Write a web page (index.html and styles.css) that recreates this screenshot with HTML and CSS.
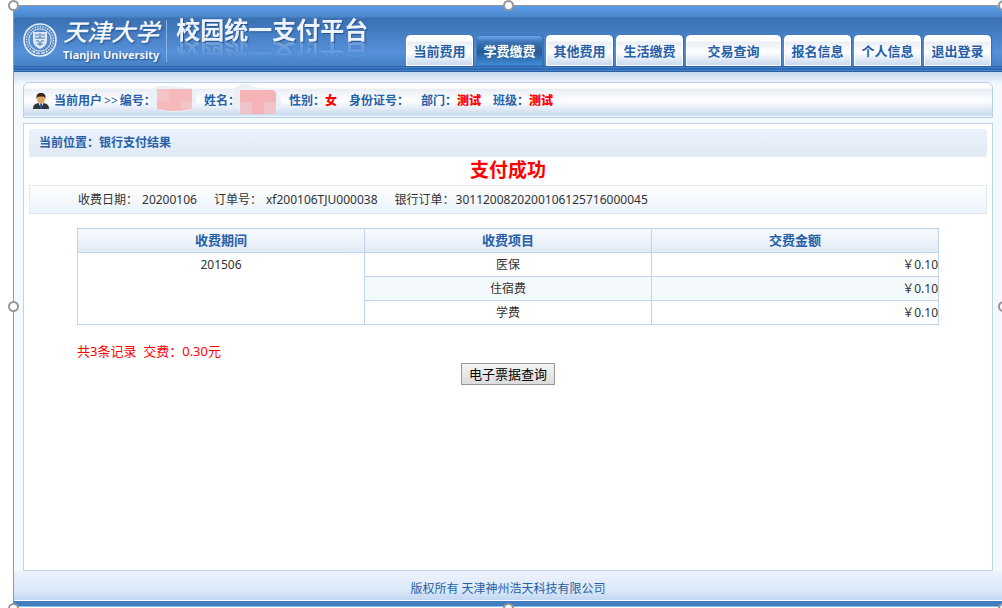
FILE: index.html
```html
<!DOCTYPE html>
<html lang="zh-CN">
<head>
<meta charset="utf-8">
<title>校园统一支付平台</title>
<link rel="stylesheet" href="styles.css">
</head>
<body>
<div class="frame">
  <div class="page">
    <header class="header">
      <div class="brand">
        <svg class="seal" viewBox="0 0 36 36" aria-hidden="true">
          <circle cx="18" cy="18" r="16" fill="#4a80c0" stroke="#e6effa" stroke-width="1.6"/>
          <circle cx="18" cy="18" r="13.4" fill="none" stroke="#b9d1ee" stroke-width="1.8" stroke-dasharray="1.6 1"/>
          <circle cx="18" cy="18" r="11.2" fill="#5a8dcb" stroke="#e6effa" stroke-width="1"/>
          <path d="M11 10h14v8c0 5-3 7-7 9-4-2-7-4-7-9z" fill="#dfe9f6"/>
          <path d="M13 13h4M19 13h4M18 11v5M13 16h10M14 19h3M19 19h3M15 22h6M18 19v5" stroke="#416fac" stroke-width="1" fill="none"/>
          <path d="M11 30l2-1M15 31h2M20 31h2M24 30l1-1" stroke="#fff" stroke-width="1.2"/>
        </svg>
        <div class="school">
          <span class="school-cn">天津大学</span>
          <span class="school-en">Tianjin University</span>
        </div>
        <h1 class="platform">校园统一支付平台</h1>
      </div>
      <nav class="tabs">
        <a class="tab" href="#">当前费用</a>
        <a class="tab active" href="#">学费缴费</a>
        <a class="tab" href="#">其他费用</a>
        <a class="tab" href="#">生活缴费</a>
        <a class="tab wide" href="#">交易查询</a>
        <a class="tab" href="#">报名信息</a>
        <a class="tab" href="#">个人信息</a>
        <a class="tab" href="#">退出登录</a>
      </nav>
    </header>

    <main class="main">
      <section class="user">
        <svg class="avatar" viewBox="0 0 18 18" aria-hidden="true">
          <path d="M1 17c0-4 2-5 5-6h6c3 1 5 2 5 6z" fill="#30343c"/>
          <path d="M6 10l3 6 3-6z" fill="#fff"/>
          <path d="M8.300 11h1.400l.6 4-1.300 2-1.300-2z" fill="#1c5fae"/>
          <ellipse cx="9" cy="7" rx="4" ry="4.600" fill="#e0a266"/>
          <path d="M4.500 7C4 2.500 6 1 9 1s5 1.500 4.500 6C13 4.500 11 4.500 9 4.500S5 4.500 4.500 7z" fill="#3a2415"/>
        </svg>
        <span class="field first">当前用户<span class="arrows">&gt;&gt;</span>编号：
          <svg class="mask" viewBox="0 0 50 32" aria-hidden="true">
            <path d="M2 8Q8 0 20 2L44 4Q50 8 49 18L44 26Q28 30 12 26Q1 22 2 8z" fill="#e9f0f6"/>
            <path d="M10 5h35v20q-18 4-35 0z" fill="#f5b9bc"/><path d="M10 5h12v12H10zM34 17h11v8H34z" fill="#f3c3c7"/>
          </svg>
        </span>
        <span class="field second">姓名：
          <svg class="mask" viewBox="0 0 50 32" aria-hidden="true">
            <path d="M0 16Q1 6 4 3Q12-3 22 3L44 7Q50 14 49 22L42 30H14Q2 24 0 16z" fill="#e9f0f6"/>
            <path d="M8 6h33l3 2v22H8z" fill="#f5b3b7"/><path d="M8 18h12v12H8zM32 18h12v12H32z" fill="#f0c2c9"/>
          </svg>
        </span>
        <span class="field">性别：<b class="value">女</b></span>
        <span class="field">身份证号：</span>
        <span class="field">部门：<b class="value">测试</b></span>
        <span class="field">班级：<b class="value">测试</b></span>
      </section>

      <section class="content">
        <div class="crumb">当前位置：银行支付结果</div>
        <h2 class="result">支付成功</h2>
        <dl class="order">
          <div class="pair"><dt>收费日期：</dt><dd>20200106</dd></div>
          <div class="pair"><dt>订单号：</dt><dd>xf200106TJU000038</dd></div>
          <div class="pair tight"><dt>银行订单：</dt><dd>3011200820200106125716000045</dd></div>
        </dl>
        <div class="detail">
          <table class="fees">
            <thead>
              <tr><th>收费期间</th><th>收费项目</th><th>交费金额</th></tr>
            </thead>
            <tbody>
              <tr><td class="period" rowspan="3">201506</td><td>医保</td><td class="money">￥0.10</td></tr>
              <tr class="even"><td>住宿费</td><td class="money">￥0.10</td></tr>
              <tr><td>学费</td><td class="money">￥0.10</td></tr>
            </tbody>
          </table>
          <p class="total">共3条记录&nbsp; 交费：0.30元</p>
          <button class="query" type="button">电子票据查询</button>
        </div>
      </section>
    </main>
    <footer class="footer">版权所有 天津神州浩天科技有限公司</footer>
  </div>
  <i class="handle top left"></i>
  <i class="handle top center"></i>
  <i class="handle top right"></i>
  <i class="handle middle left"></i>
  <i class="handle middle right"></i>
  <i class="handle bottom left"></i>
  <i class="handle bottom center"></i>
  <i class="handle bottom right"></i>
</div>
</body>
</html>
```

FILE: styles.css
```css
* { box-sizing: border-box; }

body {
  margin: 0;
  background: #fff;
  color: #333;
  font: 12px/24px "Noto Sans", "Noto Sans CJK SC", sans-serif;
}

.frame {
  position: relative;
  display: flex;
  min-height: 100vh;
  padding: 5px 0 1px 13px;
  overflow: hidden;
}

.page {
  flex: 1;
  display: flex;
  flex-direction: column;
  border: solid #979797;
  border-width: 1px 0 0 1px;
  background: #f4f9fe;
}

/* header */
.header {
  display: flex;
  justify-content: space-between;
  height: 66px;
  padding: 0 11px 6px 8px;
  border-top-right-radius: 6px;
  background:
    linear-gradient(#2f62a3 0 1px, #4380ca 1px 2px, #2d69b3 2px 4px, #4583cc 4px 5px, #2e5f9e 5px 6px) bottom / 100% 6px no-repeat,
    linear-gradient(#5a9be8, #4a85c9 11px, #3b70b1 12px, #4179bd 22px, #5690d8 46px, #4682c6 60px);
}

.brand { display: flex; align-items: flex-start; color: #f4f8fd; }
.seal { width: 36px; height: 36px; margin-top: 16px; }

.school {
  display: flex;
  flex-direction: column;
  justify-content: space-between;
  height: 42px;
  margin: 14px 0 0 4px;
  padding: 0 7px 0 1px;
  border-right: 1px solid #8db5e4;
  text-shadow: 1px 1px 2px #1f4f8d;
}
.school-cn { font-size: 24px; line-height: 24px; font-style: italic; font-weight: 500; }
.school-en { font: bold 11px/14px "Noto Sans", sans-serif; }

.platform {
  margin: 9px 0 0 9px;
  font-size: 24px;
  line-height: 30px;
  font-weight: 700;
  color: #edf3fc;
  text-shadow: 1px 1px 1px #234f8c;
  -webkit-box-reflect: below -7px linear-gradient(transparent 30%, rgba(255, 255, 255, .3));
}

.tabs { display: flex; align-items: flex-end; gap: 3px; }
.tab {
  width: 67px;
  height: 31px;
  border: 1px solid #fff;
  border-radius: 4px 4px 0 0;
  background: linear-gradient(#fff 0 5px, #e9eef6 6px, #fff 16px, #c9d9ee);
  box-shadow: 1px 0 1px #376cae;
  color: #2560a8;
  font-size: 13px;
  line-height: 30px;
  font-weight: 700;
  text-align: center;
  text-decoration: none;
  white-space: nowrap;
}
.tab.wide { width: 95px; }
.tab.active {
  border-color: #3d79c0;
  background: linear-gradient(#6ba5e8, #3f74b4 6px, #265b94 16px, #3f8ad6);
  color: #fff;
}

/* body */
.main {
  flex: 1;
  display: flex;
  flex-direction: column;
  gap: 5px;
  padding: 10px 9px 0;
  background: linear-gradient(#c5d8f0, #f4f9fe 12px);
}

.user {
  display: flex;
  align-items: center;
  gap: 12px;
  height: 36px;
  padding: 1px 8px 0;
  border: 1px solid #b9d0ea;
  border-radius: 6px 6px 0 0;
  background: linear-gradient(#fff 0 5px, #e9eef6 6px, #fff 18px, #cadaef 32px, #eaf3fc 33px);
  color: #2560a8;
  font-weight: 700;
  white-space: nowrap;
}
.avatar { width: 18px; height: 18px; margin-right: -8px; }
.field { position: relative; }
.first { width: 138px; }
.second { width: 73px; }
.arrows { padding: 0 2px; font-weight: 400; }
.mask { position: absolute; width: 50px; height: 32px; top: -5px; right: -5px; }
.value { color: #f00; }

.content {
  flex: 1;
  padding: 5px;
  border: 1px solid #c0d5eb;
  background: #fff;
}
.crumb {
  height: 28px;
  padding-left: 10px;
  border-bottom: 2px solid #e6ecf5;
  background: linear-gradient(#eaf2fc, #e1e9f4);
  color: #2560a8;
  line-height: 28px;
  font-weight: 700;
}
.result {
  margin: 0;
  color: #f00;
  font-size: 19px;
  line-height: 26px;
  padding-bottom: 2px;
  text-align: center;
}
.order {
  display: flex;
  gap: 17px;
  height: 29px;
  margin: 0 0 14px;
  padding: 0 48px;
  border: 1px solid #e1e8f0;
  background: linear-gradient(#fff, #eaf2fb);
  line-height: 28px;
  white-space: nowrap;
}
.pair { display: flex; gap: 4px; }
.pair.tight { gap: 1px; }
.order dd { margin: 0; }

.detail {
  display: flex;
  flex-direction: column;
  align-items: center;
  padding: 0 48px;
}
.fees { width: 100%; border-collapse: collapse; table-layout: fixed; }
.fees th, .fees td {
  height: 24px;
  padding: 0;
  border: 1px solid #c0d5eb;
  line-height: 23px;
  text-align: center;
}
.fees th {
  background: linear-gradient(#f8fbfe, #e2eaf6);
  color: #2560a8;
  font-size: 13px;
}
.fees .even td { background: #f4f9fe; }
.fees .period { vertical-align: top; }
.fees .money { text-align: right; }

.total {
  align-self: flex-start;
  margin: 14px 0 0;
  color: #f00;
  font-size: 13px;
}
.query {
  width: 94px;
  height: 22px;
  margin: 0;
  padding: 0;
  border: 1px solid #979797;
  background: linear-gradient(#f4f4f4, #dcdcdc);
  color: #000;
  font: 13px/20px "Noto Sans CJK SC", sans-serif;
}

.footer {
  height: 36px;
  padding-top: 6px;
  border-bottom: 1px solid #8db9e6;
  background: linear-gradient(#edf3fc, #dbe8f8 20px, #c0d7f2 29px, #fff 29px 30px, #427dc0 30px);
  color: #2560a8;
  text-align: center;
}

/* selection handles */
.handle {
  position: absolute;
  width: 11px;
  height: 11px;
  border: 2px solid #979797;
  border-radius: 50%;
  background: #fff;
}
.top { top: 0; }
.middle { top: 50%; margin-top: -3px; }
.bottom { bottom: -6px; }
.left { left: 8px; }
.center { left: 50%; margin-left: 2px; }
.right { right: -7px; }
```
